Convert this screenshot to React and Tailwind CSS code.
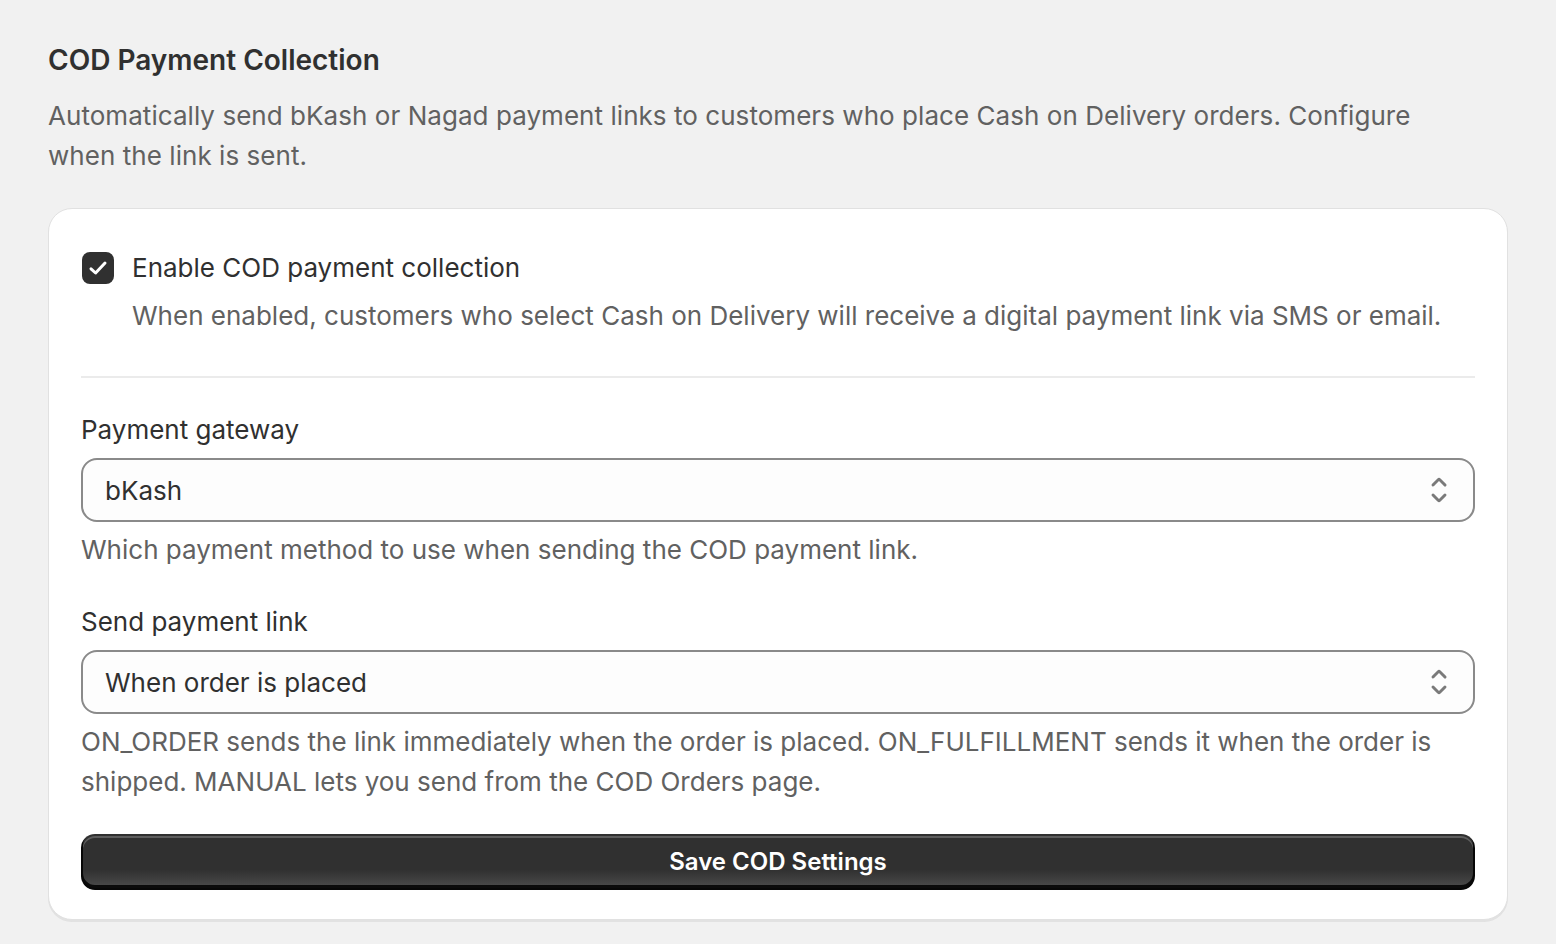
import { useState } from 'react';

function SelectIcon() {
  return (
    <svg viewBox="0 0 20 20" className="w-10 h-10 shrink-0" fill="#7a7a7a">
      <path d="M10.884 4.323a1.25 1.25 0 0 0-1.768 0l-2.646 2.647a.75.75 0 0 0 1.06 1.06l2.47-2.47 2.47 2.47a.75.75 0 1 0 1.06-1.06l-2.646-2.647Z" />
      <path d="m13.53 13.03-2.646 2.647a1.25 1.25 0 0 1-1.768 0l-2.646-2.647a.75.75 0 0 1 1.06-1.06l2.47 2.47 2.47-2.47a.75.75 0 0 1 1.06 1.06Z" />
    </svg>
  );
}

function Select({ label, value, help, options, onChange }) {
  return (
    <div>
      <label className="block leading-[40px] text-[#303030]">{label}</label>
      <div className="relative mt-2 h-16 rounded-[16px] border-2 border-[#8a8a8a] bg-[#fdfdfd] flex items-center pl-[22px] pr-[14px]">
        <span className="flex-1 text-[#303030]">{options.find((o) => o.value === value)?.label}</span>
        <SelectIcon />
        <select
          value={value}
          onChange={(e) => onChange(e.target.value)}
          className="absolute inset-0 opacity-0 cursor-pointer"
        >
          {options.map((o) => (
            <option key={o.value} value={o.value}>{o.label}</option>
          ))}
        </select>
      </div>
      <p className="mt-2 leading-[40px] text-[#616161]">{help}</p>
    </div>
  );
}

export default function App() {
  const [enabled, setEnabled] = useState(true);
  const [gateway, setGateway] = useState('bkash');
  const [trigger, setTrigger] = useState('ON_ORDER');

  return (
    <div className="min-h-screen bg-[#f1f1f1] px-12 pt-10 pb-6 text-[26px] font-['Inter',sans-serif] text-[#303030]">
      <h2 className="text-[28px] font-semibold leading-[40px] text-[#303030]">COD Payment Collection</h2>
      <p className="mt-4 max-w-[1400px] leading-[40px] text-[#616161] tracking-[0.05px]">
        Automatically send bKash or Nagad payment links to customers who place Cash on Delivery orders. Configure when the link is sent.
      </p>

      <div className="mt-8 rounded-[24px] border border-[#e1e1e1] bg-white px-8 pt-[39px] pb-[29px] shadow-[0_2px_0_0_rgba(26,26,26,0.07)]">
        <div className="flex gap-[18px]">
          <button
            type="button"
            onClick={() => setEnabled(!enabled)}
            className={`mt-1 ml-px w-8 h-8 shrink-0 rounded-[8px] flex items-center justify-center ${enabled ? 'bg-[#303030]' : 'bg-white border-2 border-[#8a8a8a]'}`}
          >
            {enabled && (
              <svg viewBox="0 0 32 32" className="w-8 h-8" fill="none" stroke="white" strokeWidth="3" strokeLinecap="round" strokeLinejoin="round">
                <path d="M9 16.8 13.6 21 23 11" />
              </svg>
            )}
          </button>
          <div>
            <div className="leading-[40px] text-[#303030]">Enable COD payment collection</div>
            <div className="mt-2 leading-[40px] text-[#616161]">
              When enabled, customers who select Cash on Delivery will receive a digital payment link via SMS or email.
            </div>
          </div>
        </div>

        <div className="mt-10 mb-8 h-[2px] bg-[#ebebeb]" />

        <div className="flex flex-col gap-8">
          <Select
            label="Payment gateway"
            value={gateway}
            onChange={setGateway}
            options={[
              { value: 'bkash', label: 'bKash' },
              { value: 'nagad', label: 'Nagad' },
            ]}
            help="Which payment method to use when sending the COD payment link."
          />
          <Select
            label="Send payment link"
            value={trigger}
            onChange={setTrigger}
            options={[
              { value: 'ON_ORDER', label: 'When order is placed' },
              { value: 'ON_FULFILLMENT', label: 'When order is fulfilled' },
              { value: 'MANUAL', label: 'Manually' },
            ]}
            help="ON_ORDER sends the link immediately when the order is placed. ON_FULFILLMENT sends it when the order is shipped. MANUAL lets you send from the COD Orders page."
          />
          <button
            type="button"
            className="h-14 w-full rounded-[14px] bg-[#303030] bg-[image:linear-gradient(180deg,rgba(48,48,48,0)_63%,rgba(255,255,255,0.15)_100%)] text-[24px] text-white font-semibold shadow-[inset_0_-3px_0_2px_rgba(0,0,0,0.85),inset_0_0_0_2px_#303030,inset_0_2px_0_2px_rgba(255,255,255,0.22)]"
          >
            Save COD Settings
          </button>
        </div>
      </div>
    </div>
  );
}
